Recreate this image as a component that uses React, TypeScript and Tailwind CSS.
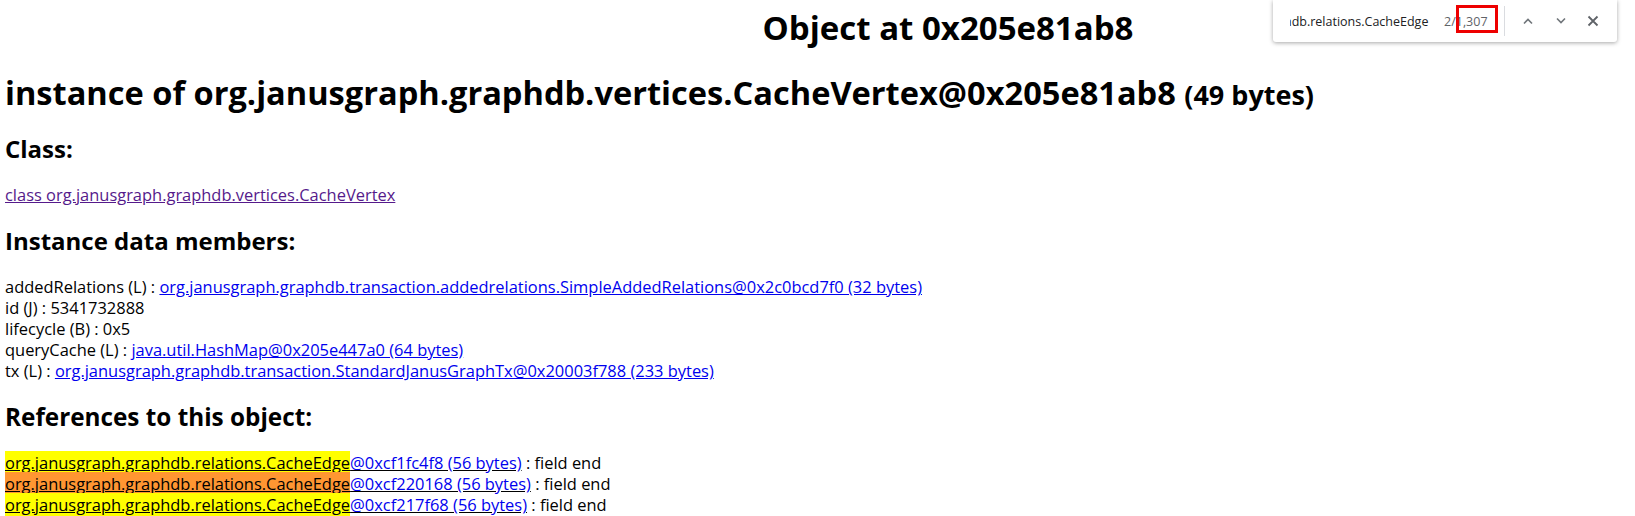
import React from "react";

const members = [
  {
    name: "addedRelations (L) : ",
    link: "org.janusgraph.graphdb.transaction.addedrelations.SimpleAddedRelations@0x2c0bcd7f0 (32 bytes)",
  },
  { name: "id (J) : 5341732888", link: "" },
  { name: "lifecycle (B) : 0x5", link: "" },
  { name: "queryCache (L) : ", link: "java.util.HashMap@0x205e447a0 (64 bytes)" },
  {
    name: "tx (L) : ",
    link: "org.janusgraph.graphdb.transaction.StandardJanusGraphTx@0x20003f788 (233 bytes)",
  },
];

const refs = [
  { addr: "@0xcf1fc4f8 (56 bytes)", active: false },
  { addr: "@0xcf220168 (56 bytes)", active: true },
  { addr: "@0xcf217f68 (56 bytes)", active: false },
];

function FindBar() {
  return (
    <div className="absolute top-0 left-[1273px] w-[344px] h-[42px] bg-white rounded-b-[3px] shadow-[0_1px_4px_rgba(0,0,0,0.35)] flex items-center text-[12.5px] font-['Open_Sans',sans-serif]">
      <div className="ml-[17px] w-[154px] overflow-hidden whitespace-nowrap text-[#202124]">
        <span className="-ml-[6px]">hdb.relations.CacheEdge</span>
      </div>
      <div className="w-[43px] text-[#5f6368] whitespace-nowrap">2/1,307</div>
      <div className="ml-[17px] w-px h-[30px] bg-[#dadce0]" />
      <svg className="ml-[17px]" width="12" height="8" viewBox="0 0 12 8" fill="none" stroke="#70757a" strokeWidth="1.6">
        <path d="M2 6.5 6 2.5l4 4" />
      </svg>
      <svg className="ml-[21px]" width="12" height="8" viewBox="0 0 12 8" fill="none" stroke="#70757a" strokeWidth="1.6">
        <path d="M2 1.5 6 5.5l4-4" />
      </svg>
      <svg className="ml-[20px]" width="12" height="12" viewBox="0 0 12 12" fill="none" stroke="#5f6368" strokeWidth="1.8">
        <path d="M1.5 1.5l9 9M10.5 1.5l-9 9" />
      </svg>
      {/* red box drawn over the match count */}
      <div className="absolute left-[183px] top-[5px] w-[42px] h-[28px] border-[3px] border-[#ee0000]" />
    </div>
  );
}

export default function App() {
  return (
    <div className="relative w-[1635px] h-[516px] overflow-hidden bg-white text-black font-['Open_Sans',sans-serif] text-[16.45px] leading-[21px]">
      <div className="pl-[5px]">
        <h1 className="mt-[8px] h-[40px] leading-[40px] text-[33px] font-bold text-center pl-[256px]">
          Object at 0x205e81ab8
        </h1>
        <h1 className="mt-[25px] h-[40px] leading-[40px] text-[32.6px] font-bold whitespace-nowrap">
          instance of org.janusgraph.graphdb.vertices.CacheVertex@0x205e81ab8{" "}
          <span className="text-[27px]">(49 bytes)</span>
        </h1>
        <h2 className="mt-[21px] h-[30px] leading-[30px] text-[24px] font-bold">Class:</h2>
        <div className="mt-[20px]">
          <a className="text-[#551a8b] underline">class org.janusgraph.graphdb.vertices.CacheVertex</a>
        </div>
        <h2 className="mt-[21px] h-[30px] leading-[30px] text-[24px] font-bold">Instance data members:</h2>
        <div className="mt-[20px]">
          {members.map((m, i) => (
            <div key={i} className="whitespace-nowrap">
              {m.name}
              {m.link !== "" ? <a className="text-[#0000ee] underline">{m.link}</a> : null}
            </div>
          ))}
        </div>
        <h2 className="mt-[21px] h-[30px] leading-[30px] text-[24.3px] font-bold">References to this object:</h2>
        <div className="mt-[20px]">
          {refs.map((r, i) => (
            <div key={i} className="whitespace-nowrap">
              <a className="underline">
                <span className={r.active ? "bg-[#ff9632] text-black" : "bg-[#ffff00] text-black"}>
                  org.janusgraph.graphdb.relations.CacheEdge
                </span>
                <span className="text-[#0000ee]">{r.addr}</span>
              </a>{" "}
              : field end
            </div>
          ))}
        </div>
      </div>
      <FindBar />
    </div>
  );
}
